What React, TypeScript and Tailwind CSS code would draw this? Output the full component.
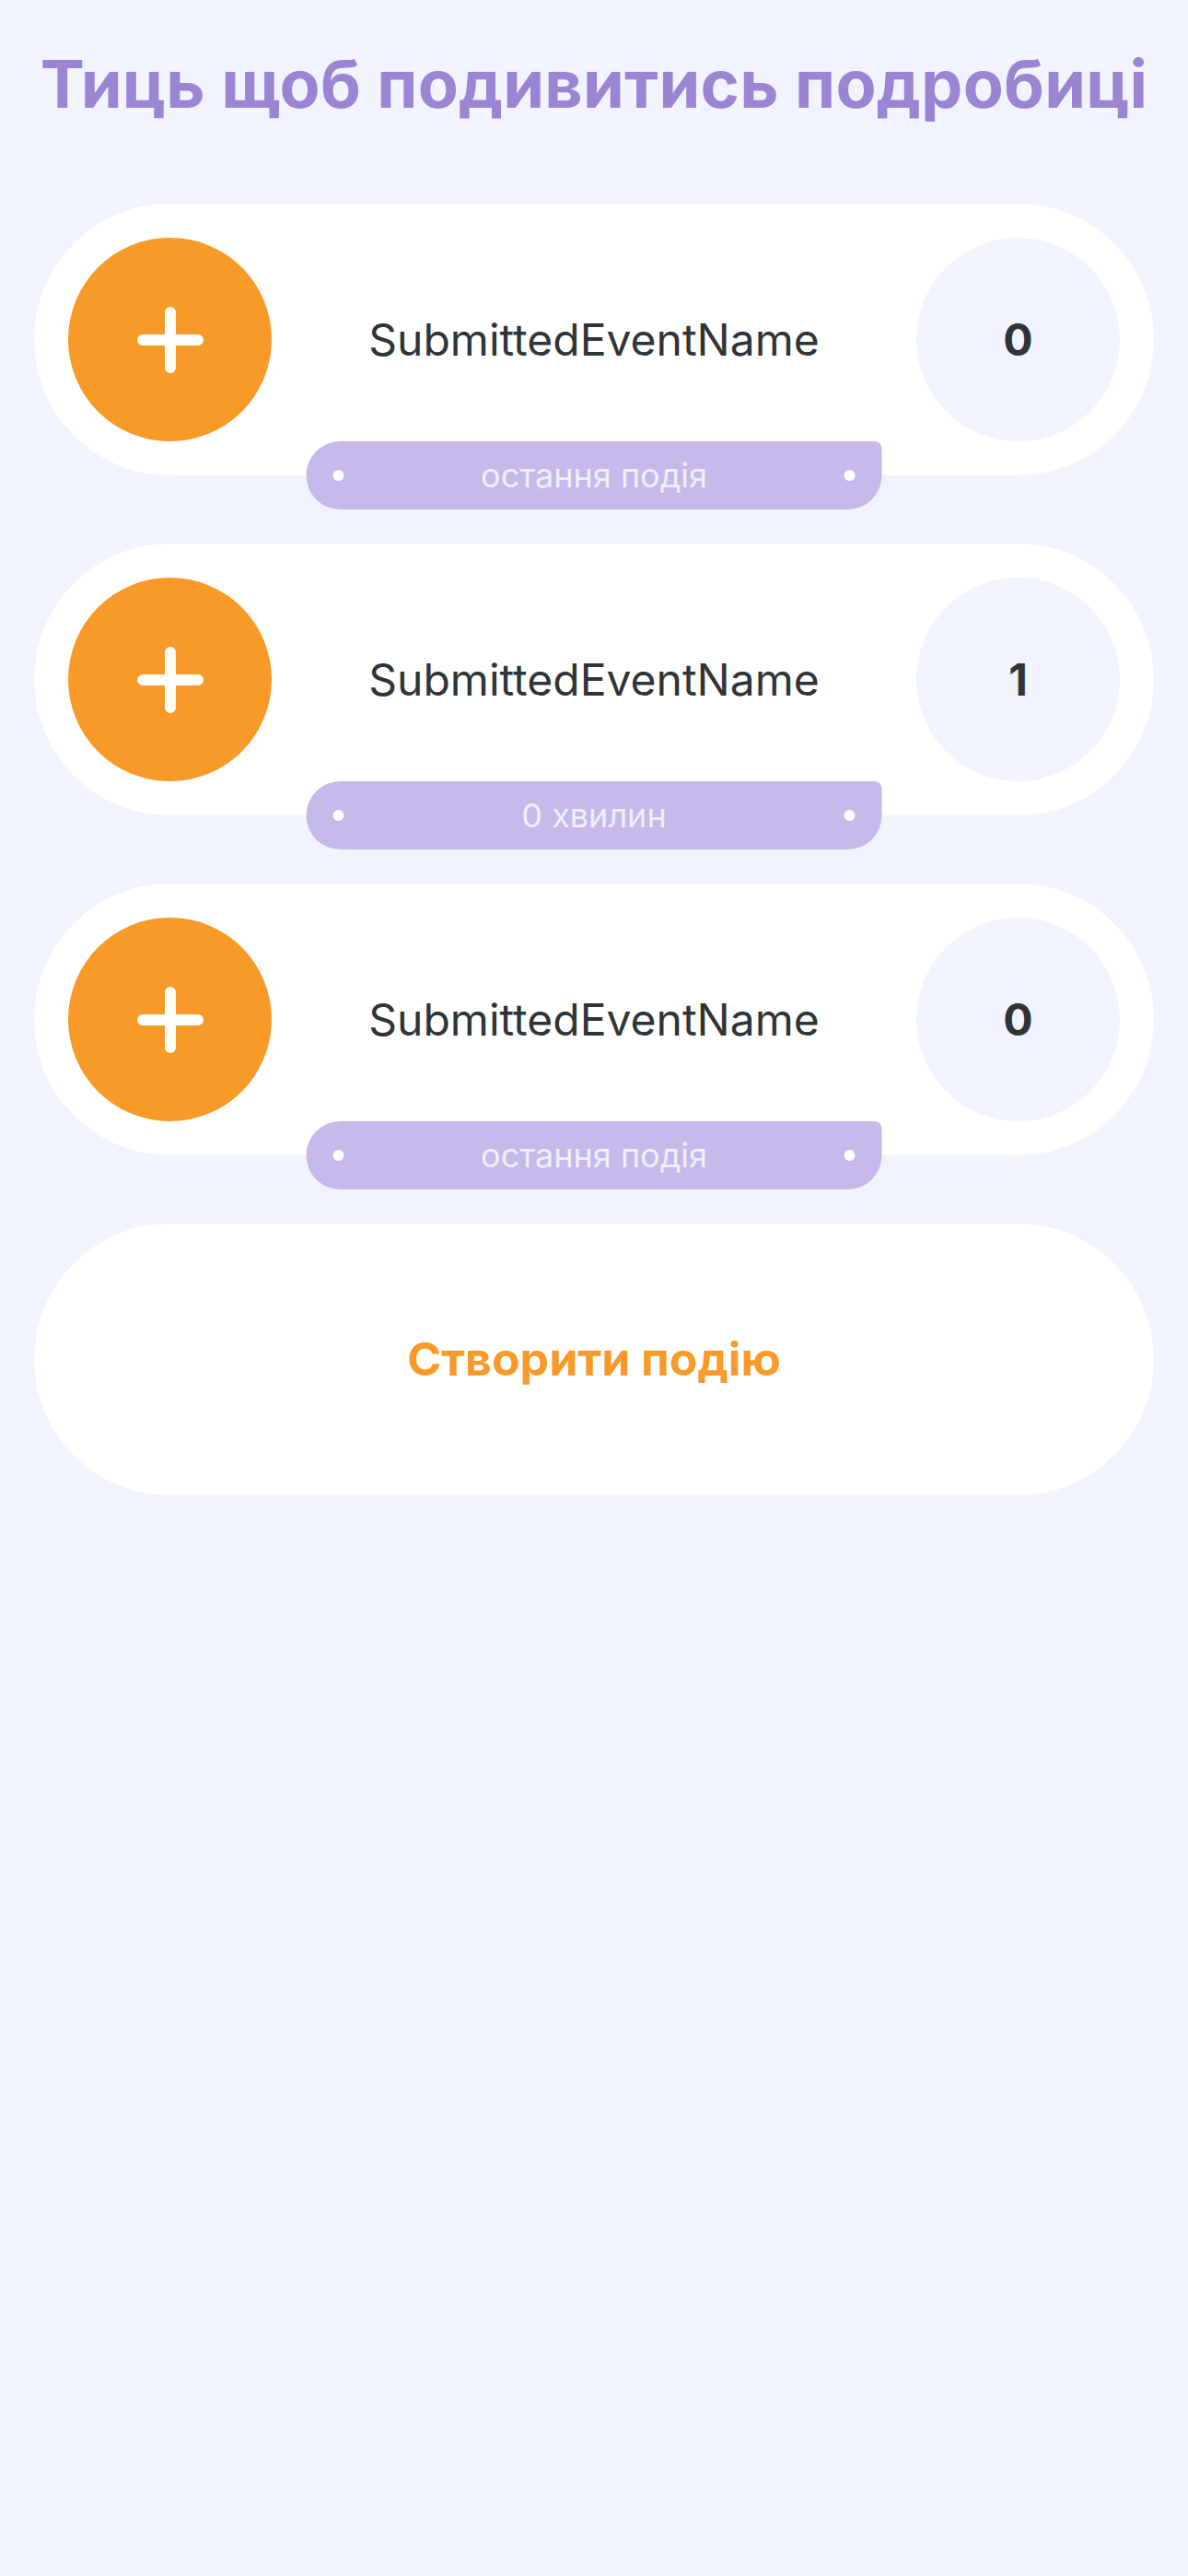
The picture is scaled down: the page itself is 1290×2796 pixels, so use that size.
import React from 'react';

interface EventItem {
  id: number;
  name: string;
  count: number;
  last: string;
}

const events: EventItem[] = [
  { id: 1, name: 'SubmittedEventName', count: 0, last: 'остання подія' },
  { id: 2, name: 'SubmittedEventName', count: 1, last: '0 хвилин' },
  { id: 3, name: 'SubmittedEventName', count: 0, last: 'остання подія' },
];

function PlusIcon() {
  return (
    <svg width="72" height="72" viewBox="0 0 72 72" fill="none">
      <path d="M36 6v60M6 36h60" stroke="white" strokeWidth="12" strokeLinecap="round" />
    </svg>
  );
}

function EventCard({ item }: { item: EventItem }) {
  return (
    <div className="relative">
      <div className="flex h-[295px] items-center rounded-full bg-white p-[37px]">
        <button className="flex h-[221px] w-[221px] shrink-0 items-center justify-center rounded-full bg-[#f89a27]">
          <PlusIcon />
        </button>
        <div className="flex-1 text-center text-[48px] text-[#2f3437]">{item.name}</div>
        <div className="flex h-[221px] w-[221px] shrink-0 items-center justify-center rounded-full bg-[#f1f3fe] text-[48px] font-bold text-[#2f3437]">
          {item.count}
        </div>
      </div>
      {/* last event badge */}
      <div className="absolute bottom-[-37px] left-1/2 flex h-[74px] w-[625px] -translate-x-1/2 items-center justify-between rounded-l-[37px] rounded-tr-[8px] rounded-br-[37px] bg-[#c5b9ea] px-[29px]">
        <span className="h-[12px] w-[12px] rounded-full bg-white" />
        <span className="text-[36px] text-[#f1eefc]">{item.last}</span>
        <span className="h-[12px] w-[12px] rounded-full bg-white" />
      </div>
    </div>
  );
}

export default function App() {
  return (
    <div className="min-h-[2796px] bg-[#f1f3fe] px-[37px] pt-[48px] font-['Inter',_'Roboto',_sans-serif]">
      <h1 className="mb-[87px] text-center text-[72px] font-bold leading-[86px] tracking-[0.2px] text-[#9b85d3]">
        Тиць щоб подивитись подробиці
      </h1>
      <div className="flex flex-col gap-[74px]">
        {events.map(item => (
          <EventCard key={item.id} item={item} />
        ))}
        <button className="flex h-[295px] items-center justify-center rounded-full bg-white text-[50px] font-bold text-[#f89a27]">
          Створити подію
        </button>
      </div>
    </div>
  );
}
